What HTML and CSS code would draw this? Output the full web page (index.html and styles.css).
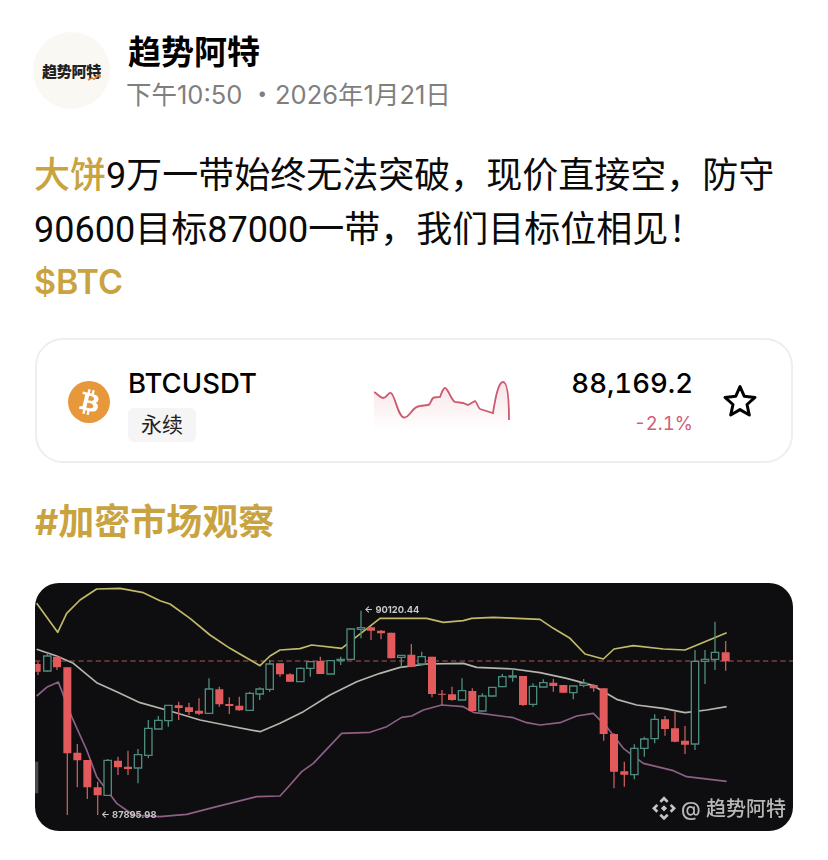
FILE: index.html
```html
<!DOCTYPE html>
<html lang="zh">
<head>
<meta charset="utf-8">
<title>趋势阿特</title>
<link rel="stylesheet" href="styles.css">
</head>
<body>
<main class="post">
  <header class="author">
    <div class="avatar">
      <span class="avatar-text">趋势阿特</span>
      <svg class="avatar-arrow" viewBox="0 0 16 8" aria-hidden="true"><path d="M1 7L6 4.500L8 6L14 1.500M11 1.500H15V4"/></svg>
    </div>
    <div class="author-info">
      <div class="author-name">趋势阿特</div>
      <div class="author-time">下午10:50 ・2026年1月21日</div>
    </div>
  </header>

  <p class="content"><span class="gold">大饼</span>9万一带始终无法突破，现价直接空，防守<br>90600目标87000一带，我们目标位相见！<span class="gold cashtag">$BTC</span></p>

  <section class="ticker">
    <svg class="coin" viewBox="0 0 32 32" aria-hidden="true">
      <circle cx="16" cy="16" r="16" fill="#e6983a"/>
      <path fill="#fff" d="M23.189 14.02c.314-2.096-1.283-3.223-3.465-3.975l.708-2.84-1.728-.43-.69 2.765c-.454-.114-.92-.22-1.385-.326l.695-2.783L15.596 6l-.708 2.839c-.376-.086-.746-.17-1.104-.26l.002-.009-2.384-.595-.46 1.846s1.283.294 1.256.312c.7.175.826.638.805 1.006l-.806 3.235c.048.012.11.03.18.057l-.183-.045-1.13 4.532c-.086.212-.303.531-.793.41.018.025-1.256-.313-1.256-.313l-.858 1.978 2.25.561c.418.105.828.215 1.231.318l-.715 2.872 1.727.43.708-2.84c.472.127.93.245 1.378.357l-.706 2.828 1.728.43.715-2.866c2.948.558 5.164.333 6.097-2.333.752-2.146-.037-3.385-1.588-4.192 1.13-.26 1.98-1.003 2.207-2.538zm-3.95 5.538c-.533 2.147-4.148.986-5.32.695l.95-3.805c1.172.293 4.929.872 4.37 3.11zm.535-5.569c-.487 1.953-3.495.96-4.47.717l.86-3.45c.975.243 4.118.696 3.61 2.733z"/>
    </svg>
    <div class="ticker-name">
      <div class="symbol">BTCUSDT</div>
      <span class="tag">永续</span>
    </div>
    <svg class="spark" viewBox="374 378 138 52" aria-hidden="true">
      <defs>
        <linearGradient id="sparkfill" x1="0" y1="0" x2="0" y2="1">
          <stop offset="0" stop-color="#d2566f" stop-opacity=".16"/>
          <stop offset="1" stop-color="#d2566f" stop-opacity="0"/>
        </linearGradient>
      </defs>
      <path fill="url(#sparkfill)" d="M374 392C378 394 380 398 383 398C387 398 388 392 391 393C395 395 398 417 404 417.500C410 418 412 406 420 406L428 405C431 405 431 398 434 397.500L440 397C442 392 443 388 445 388C448 388 451 400 455 402L463 403L468 405L475 401C477 402 478 408 480 409L493 413C495 400 498 382 503 382C507 382 509 395 509 420V430H374Z"/>
      <path class="spark-line" d="M374 392C378 394 380 398 383 398C387 398 388 392 391 393C395 395 398 417 404 417.500C410 418 412 406 420 406L428 405C431 405 431 398 434 397.500L440 397C442 392 443 388 445 388C448 388 451 400 455 402L463 403L468 405L475 401C477 402 478 408 480 409L493 413C495 400 498 382 503 382C507 382 509 395 509 420"/>
    </svg>
    <div class="ticker-price">
      <div class="price">88,169.2</div>
      <div class="change">-2.1%</div>
    </div>
    <svg class="star" viewBox="0 0 36 36" aria-hidden="true">
      <path d="M18 3.500L22.300 13.300L33 14.400L25 21.500L27.300 32L18 26.600L8.700 32L11 21.500L3 14.400L13.700 13.300Z"/>
    </svg>
  </section>

  <div class="hashtag">#加密市场观察</div>

  <figure class="chart">
    <svg class="chart-svg" viewBox="15 9 2274 744" aria-label="BTC K线图">
      <rect class="handle" x="15" y="545" width="10" height="95"/>
      <path class="dash" d="M15 243H2289"/>
      <path class="band band-y" d="M20 70L83 157L110 100L150 60L200 27L270 25L340 38L390 62L420 72L480 115L540 165L600 205L640 228L690 257L720 228L750 210L810 206L845 195L935 205L1050 115L1190 115L1240 127L1300 122L1325 115L1390 112L1530 118L1570 145L1620 175L1665 222L1720 237L1752 207L1810 197L1900 207L1965 210L2090 158"/>
      <path class="band band-w" d="M20 208L80 228L130 250L200 308L260 335L330 368L420 393L510 420L600 438L690 455L750 430L820 395L900 345L980 305L1050 280L1110 262L1190 252L1300 250L1340 262L1450 267L1530 278L1610 295L1690 317L1760 358L1820 375L1900 385L1965 398L2030 390L2090 380"/>
      <path class="band band-p" d="M20 348L50 322L85 306L125 410L170 510L200 590L260 670L310 705L390 710L470 703L560 680L680 650L750 648L780 615L815 575L850 550L935 460L1020 457L1070 440L1115 412L1145 408L1180 390L1235 375L1300 380L1330 397L1450 413L1490 428L1530 435L1590 428L1640 408L1690 400L1730 440L1780 505L1840 550L1930 572L1970 590L2090 604"/>
      <path class="wick-r" d="M24 245V285M81 228V270M112 262V705M142 492V622M172 540V657M203 605V705M264 530V585M294 512V585M446 365V420M477 368V405M507 355V405M568 320V380M598 352V402M628 350V392M750 250V290M780 280V305M871 230V282M1023 140V180M1053 150V178M1084 158V235M1144 192V262M1206 230V352M1236 330V376M1266 320V362M1327 325V395M1479 288V378M1570 297V335M1600 315V338M1691 312V335M1721 325V482M1752 460V625M1783 545V620M1905 408V467M1935 395V487M1965 438V522M2087 183V272"/>
      <path class="body-r" d="M16 252h16v23h-16zM69 230h24v32h-24zM100 262h24v258h-24zM130 518h24v23h-24zM160 540h24v82h-24zM191 622h24v24h-24zM252 542h24v20h-24zM282 560h24v7h-24zM434 376h24v8h-24zM465 382h24v14h-24zM495 392h24v9h-24zM556 328h24v45h-24zM586 372h24v6h-24zM616 377h24v14h-24zM738 250h24v33h-24zM768 283h24v22h-24zM859 243h24v39h-24zM1011 142h24v10h-24zM1041 152h24v8h-24zM1072 158h24v77h-24zM1132 224h24v36h-24zM1194 230h24v112h-24zM1224 341h24v3h-24zM1254 343h24v17h-24zM1315 333h24v60h-24zM1467 288h24v87h-24zM1558 308h24v10h-24zM1588 315h24v23h-24zM1679 315h24v10h-24zM1709 325h24v137h-24zM1740 462h24v113h-24zM1771 574h24v10h-24zM1893 418h24v29h-24zM1923 445h24v40h-24zM1953 482h24v12h-24zM2075 217h24v27h-24z"/>
      <path class="wick-g" d="M52 222V275M233 537V646M324 507V610M355 420V535M385 408V447M415 375V440M537 295V400M659 335V392M689 322V360M719 240V335M811 262V305M841 245V290M902 240V282M932 230V255M962 145V240M993 92V175M1114 225V262M1175 215V255M1296 295V360M1357 340V395M1387 322V350M1417 282V322M1448 268V305M1509 310V380M1540 298V322M1630 318V358M1661 297V322M1813 493V598M1843 470V530M1874 403V490M1995 210V510M2025 210V312M2055 125V270"/>
      <path class="body-g" d="M41 228h22v45h-22zM222 541h22v105h-22zM313 524h22v40h-22zM344 445h22v81h-22zM374 421h22v26h-22zM404 376h22v46h-22zM526 327h22v73h-22zM648 340h22v51h-22zM678 327h22v15h-22zM708 252h22v76h-22zM800 265h22v40h-22zM830 245h22v20h-22zM891 242h22v40h-22zM921 238h22v4h-22zM951 147h22v91h-22zM982 143h22v5h-22zM1103 226h22v6h-22zM1164 230h22v22h-22zM1285 332h22v28h-22zM1346 348h22v45h-22zM1376 322h22v26h-22zM1406 290h22v30h-22zM1437 288h22v3h-22zM1498 319h22v54h-22zM1529 308h22v13h-22zM1619 318h22v20h-22zM1650 310h22v6h-22zM1802 505h22v79h-22zM1832 477h22v28h-22zM1863 418h22v58h-22zM1984 244h22v248h-22zM2014 238h22v6h-22zM2044 217h22v21h-22z"/>
      <text class="chart-label" x="213" y="715">← 87895.98</text>
      <text class="chart-label" x="1003" y="100">← 90120.44</text>
      <path class="bn-logo" transform="translate(1866 649) scale(3)" d="M12 0l4.600 4.600-1.900 1.900L12 3.800 9.300 6.500 7.400 4.600zM4.400 7.600L6.300 9.500 3.800 12l2.500 2.500-1.900 1.900L0 12zM19.600 7.600L24 12l-4.400 4.400-1.900-1.900 2.500-2.500-2.500-2.500zM12 8.900l3.100 3.100L12 15.100 8.900 12zM7.400 19.400l1.900-1.900 2.700 2.700 2.700-2.700 1.900 1.900L12 24z"/>
      <text class="chart-mark" x="1953" y="708">@ 趋势阿特</text>
    </svg>
  </figure>
</main>
</body>
</html>
```

FILE: styles.css
```css
* { box-sizing: border-box; }

html, body {
  margin: 0;
  padding: 0;
  background: #fff;
}

body {
  font-family: Inter, "Noto Sans CJK SC", sans-serif;
  color: #000;
}

.post {
  width: 828px;
  height: 860px;
  overflow: hidden;
  padding: 32px 35px 0;
}

.author {
  display: flex;
  align-items: center;
  gap: 18px;
  margin-left: -2px;
}

.avatar {
  position: relative;
  width: 77px;
  height: 77px;
  flex: none;
  border-radius: 50%;
  background: #faf8f3;
  display: flex;
  align-items: center;
  justify-content: center;
}

.avatar-text {
  font-size: 15px;
  font-weight: 900;
  color: #222;
  letter-spacing: -.3px;
}

.avatar-arrow {
  position: absolute;
  left: 54px;
  top: 42px;
  width: 14px;
  height: 7px;
}

.avatar-arrow path {
  fill: none;
  stroke: #d9782f;
  stroke-width: 1.600;
}

.author-info {
  display: flex;
  flex-direction: column;
  gap: 8px;
}

.author-name {
  font-size: 33px;
  line-height: 40px;
  font-weight: 700;
}

.author-time {
  font-size: 25.500px;
  line-height: 29px;
  color: #7f7f7f;
  white-space: nowrap;
  margin-left: -2px;
}

.content {
  margin: 40px 0 0 -1px;
  font-family: Roboto, "Noto Sans CJK SC", sans-serif;
  font-size: 36px;
  font-weight: 400;
  line-height: 54px;
  color: #0a0a0a;
  white-space: nowrap;
}

.gold {
  color: #c9a33f;
  font-weight: 500;
}

.cashtag {
  display: block;
  font-family: Inter, sans-serif;
  font-size: 34px;
  line-height: 50px;
  font-weight: 600;
}

.ticker {
  display: flex;
  align-items: center;
  height: 125px;
  margin-top: 31px;
  padding: 0 33px 0 31px;
  border: 2px solid #eeeeee;
  border-radius: 28px;
}

.coin {
  width: 42px;
  height: 42px;
  flex: none;
  margin-top: 2px;
}

.ticker-name {
  display: flex;
  flex-direction: column;
  align-items: flex-start;
  gap: 9px;
  margin-top: 8px;
  margin-left: 18px;
  width: 246px;
}

.symbol {
  font-size: 27.500px;
  line-height: 32px;
  font-weight: 500;
}

.tag {
  height: 34px;
  padding: 0 13px;
  border-radius: 6px;
  background: #f5f5f5;
  font-size: 21px;
  line-height: 34px;
  color: #222;
}

.spark {
  width: 138px;
  height: 52px;
  flex: none;
  margin-top: 6px;
}

.spark-line {
  fill: none;
  stroke: #cc5a70;
  stroke-width: 1.800;
}

.ticker-price {
  display: flex;
  flex-direction: column;
  align-items: flex-end;
  gap: 12px;
  margin-left: auto;
}

.price {
  font-size: 27.500px;
  line-height: 32px;
  font-weight: 500;
  font-variant-numeric: tabular-nums;
}

.change {
  font-size: 18.500px;
  line-height: 24px;
  color: #cf6078;
  font-variant-numeric: tabular-nums;
}

.star {
  width: 36px;
  height: 36px;
  flex: none;
  margin-left: 29px;
}

.star path {
  fill: none;
  stroke: #000;
  stroke-width: 3;
  stroke-linejoin: round;
}

.hashtag {
  margin-top: 36px;
  font-size: 36px;
  line-height: 46px;
  font-weight: 700;
  color: #c9a33f;
}

.chart {
  margin: 38px 0 0;
  height: 248px;
  border-radius: 24px;
  overflow: hidden;
  background: #0e0e10;
}

.chart-svg {
  display: block;
  width: 758px;
  height: 248px;
  filter: blur(.35px);
}

.handle { fill: #4a4a4a; }

.dash {
  fill: none;
  stroke: #a85a55;
  stroke-width: 3;
  stroke-dasharray: 16 10;
}

.band {
  fill: none;
  stroke-width: 5;
  stroke-linejoin: round;
}

.band-y { stroke: #c2b96a; }
.band-w { stroke: #b5b5ad; }
.band-p { stroke: #8f5f86; }

.wick-r {
  fill: none;
  stroke: #c05a5c;
  stroke-width: 4;
}

.body-r { fill: #e25a5c; }

.wick-g {
  fill: none;
  stroke: #4f8b7c;
  stroke-width: 4;
}

.body-g {
  fill: #0e0e10;
  stroke: #4f8b7c;
  stroke-width: 4;
}

.chart-label {
  font-family: Inter, sans-serif;
  font-size: 28px;
  font-weight: 700;
  fill: #c9c9c9;
}

.bn-logo { fill: #c4c4c4; }

.chart-mark {
  font-family: Inter, "Noto Sans CJK SC", sans-serif;
  font-size: 60px;
  font-weight: 500;
  fill: #b8b8b8;
}
```
